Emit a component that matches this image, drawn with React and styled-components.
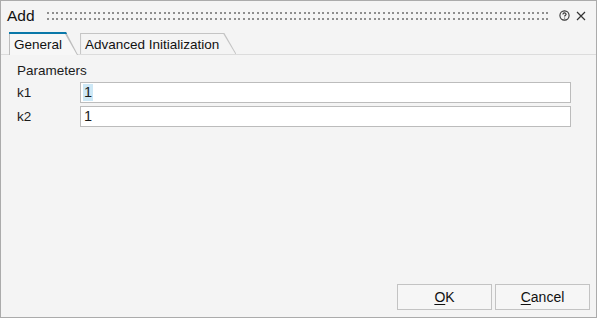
import React from 'react';
import styled, { createGlobalStyle } from 'styled-components';

const GlobalStyle = createGlobalStyle`
    html, body {
        margin : 0;
        padding : 0;
        background : #f4f4f4;
    }
`

/* dialog window */
const Window = styled.div`
    box-sizing : border-box;
    width : 597px;
    height : 318px;
    border : 1px solid #ababab;
    background : #f4f4f4;
    display : flex;
    flex-direction : column;
    font-family : 'Liberation Sans', Arial, sans-serif;
    font-size : 13.5px;
    color : #1b1b1b;
`

const TitleBar = styled.div`
    height : 29px;
    display : flex;
    align-items : center;
    padding : 0 10px 0 6px;
`

const Title = styled.div`
    font-size : 15.5px;
    color : #111;
    width : 40px;
`

const Grip = styled.svg`
    flex : 1;
    height : 10px;
    margin-right : 8px;
`

const IconBtn = styled.svg`
    width : ${(p) => p.$size || 11}px;
    height : ${(p) => p.$size || 11}px;
    margin-left : ${(p) => p.$gap || 0}px;
    flex : none;
`

/* tabs */
const TabBar = styled.div`
    margin-top : 1px;
    height : 23px;
    display : flex;
    align-items : flex-end;
    padding-left : 8px;
    border-bottom : 1px solid #dcdcdc;
`

const TabOuter = styled.div`
    position : relative;
    height : ${(p) => (p.$active ? 23 : 21)}px;
    margin-bottom : ${(p) => (p.$active ? -1 : 0)}px;
    margin-right : 2px;
    background : ${(p) => (p.$active ? '#bdbdbd' : '#c4c4c4')};
    clip-path : polygon(0 0, calc(100% - 12px) 0, 100% 100%, 0 100%);
    display : flex;
`

const TabInner = styled.div`
    margin : ${(p) => (p.$active ? '2px 0 0 1px' : '1px 0 0 1px')};
    flex : 1;
    background : ${(p) => (p.$active ? '#f7f7f7' : '#f4f4f4')};
    clip-path : polygon(0 0, calc(100% - 13px) 0, calc(100% - 1px) 100%, 0 100%);
    padding : 0 ${(p) => (p.$active ? 16 : 17)}px 0 4px;
    display : flex;
    align-items : center;
    color : #111;
`

const ActiveLine = styled.div`
    position : absolute;
    top : 0;
    left : 0;
    right : 11px;
    height : 2px;
    background : #0a78a9;
`

/* parameters */
const Content = styled.div`
    flex : 1;
    padding : 7px 25px 0 16px;
`

const SectionTitle = styled.div`
    height : 18px;
    line-height : 18px;
    margin-bottom : 2px;
`

const ParamGrid = styled.div`
    display : grid;
    grid-template-columns : 63px 1fr;
    row-gap : 3px;
    align-items : center;
`

const Label = styled.div`
    line-height : 21px;
`

const Field = styled.div`
    box-sizing : border-box;
    height : 21px;
    background : #fff;
    border : 1px solid #bcbcbc;
    display : flex;
    align-items : center;
    padding-left : 2px;
    font-size : 14.5px;
`

const Sel = styled.span`
    background : ${(p) => (p.$selected ? '#cde8f6' : 'transparent')};
    padding : 0 1px;
    line-height : 17px;
`

/* buttons */
const Footer = styled.div`
    display : flex;
    justify-content : flex-end;
    gap : 3px;
    padding : 0 6px 7px 0;
`

const Button = styled.div`
    box-sizing : border-box;
    width : 95px;
    height : 26px;
    border : 1px solid #c3c3c3;
    background : #f6f6f6;
    display : flex;
    align-items : center;
    justify-content : center;
    font-size : 14px;
    color : #111;

    u {
        text-decoration-thickness : 1px;
        text-underline-offset : 2px;
    }
`

const GripDots = () => {
    return (
        <Grip preserveAspectRatio="none">
            <defs>
                <pattern id="dots" width="14" height="10" patternUnits="userSpaceOnUse">
                    <rect x="0" y="1" width="2" height="2" fill="#8e8e8e" />
                    <rect x="5" y="1" width="2" height="2" fill="#8e8e8e" />
                    <rect x="9" y="1" width="2" height="2" fill="#8e8e8e" />
                    <rect x="0" y="7" width="2" height="2" fill="#8e8e8e" />
                    <rect x="5" y="7" width="2" height="2" fill="#8e8e8e" />
                    <rect x="9" y="7" width="2" height="2" fill="#8e8e8e" />
                </pattern>
            </defs>
            <rect width="100%" height="100%" fill="url(#dots)" />
        </Grip>
    );
}

const params = [
    { name : 'k1', value : '1', selected : true },
    { name : 'k2', value : '1', selected : false },
];

const App = () => {
    return (
        <>
            <GlobalStyle />
            <Window>
                <TitleBar>
                    <Title>Add</Title>
                    <GripDots />
                    <IconBtn $size={11} viewBox="0 0 11 11">
                        <circle cx="5.5" cy="5.5" r="4.6" fill="none" stroke="#333" strokeWidth="1.1" />
                        <path d="M3.9 4.4 C3.9 3.4 4.6 2.9 5.5 2.9 C6.4 2.9 7.1 3.5 7.1 4.3 C7.1 5.2 5.6 5.3 5.6 6.5" fill="none" stroke="#333" strokeWidth="1.1" />
                        <circle cx="5.6" cy="8" r="0.6" fill="#333" />
                    </IconBtn>
                    <IconBtn $size={10} $gap={6} viewBox="0 0 10 10">
                        <path d="M1 1 L9 9 M9 1 L1 9" stroke="#333" strokeWidth="1.2" />
                    </IconBtn>
                </TitleBar>

                <TabBar>
                    <TabOuter $active>
                        <ActiveLine />
                        <TabInner $active>General</TabInner>
                    </TabOuter>
                    <TabOuter>
                        <TabInner>Advanced Initialization</TabInner>
                    </TabOuter>
                </TabBar>

                <Content>
                    <SectionTitle>Parameters</SectionTitle>
                    <ParamGrid>
                        {params.map((p) => (
                            <React.Fragment key={p.name}>
                                <Label>{p.name}</Label>
                                <Field>
                                    <Sel $selected={p.selected}>{p.value}</Sel>
                                </Field>
                            </React.Fragment>
                        ))}
                    </ParamGrid>
                </Content>

                <Footer>
                    <Button><span><u>O</u>K</span></Button>
                    <Button><span><u>C</u>ancel</span></Button>
                </Footer>
            </Window>
        </>
    );
}

export default App;
